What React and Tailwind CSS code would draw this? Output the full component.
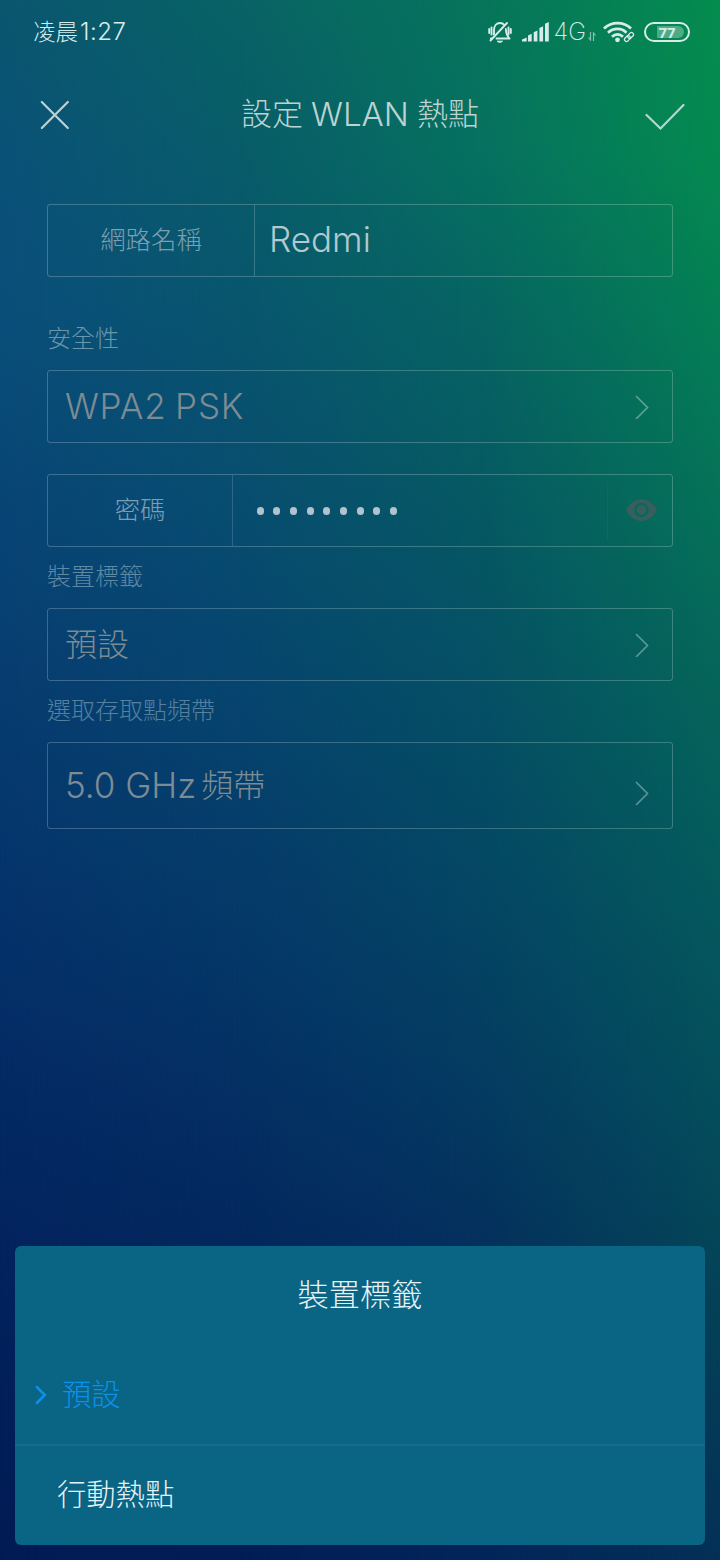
import React, { useState } from 'react';

const tags = ['預設', '行動熱點'];

// light latin glyphs next to the CJK ones
function Latin({ className, children }) {
  return <span className={`font-['Inter'] ${className}`}>{children}</span>;
}

function Backdrop() {
  return (
    <div className="absolute inset-0 -z-10 bg-[linear-gradient(180deg,#0a566f_0px,#0a5278_150px,#0a4f7b_300px,#084576_500px,#073c70_700px,#05336b_900px,#042963_1100px,#03235e_1250px,#011b55_1560px)]">
      <div className="absolute inset-0 bg-[linear-gradient(180deg,#086365_0px,#085c69_150px,#08566e_300px,#084d70_500px,#06446e_700px,#053a69_900px,#042f64_1100px,#03275e_1250px,#021d56_1560px)] [mask-image:linear-gradient(90deg,transparent_0px,#000_240px)]" />
      <div className="absolute inset-0 bg-[linear-gradient(180deg,#06755b_0px,#067160_150px,#066562_300px,#065963_500px,#054f65_700px,#044664_900px,#043a61_1100px,#04305d_1250px,#022559_1560px)] [mask-image:linear-gradient(90deg,transparent_240px,#000_480px)]" />
      <div className="absolute inset-0 bg-[linear-gradient(180deg,#048c4e_0px,#048a50_150px,#048054_300px,#057258_500px,#05645a_700px,#04595c_900px,#044e5c_1100px,#044558_1250px,#033057_1560px)] [mask-image:linear-gradient(90deg,transparent_480px,#000_720px)]" />
    </div>
  );
}

function StatusBar() {
  return (
    <div className="flex h-16 items-center justify-between pl-[33px] pr-[30px] text-[#d5ecea]">
      <div className="flex items-center leading-none">
        <span className="mb-1 text-[22.500px]">凌晨</span>
        <Latin className="ml-0.5 text-[24px] font-light tracking-[0.5px]">1:27</Latin>
      </div>
      <div className="flex items-center">
        {/* muted bell */}
        <svg width="24" height="22" viewBox="0 0 24 22" fill="none" stroke="currentColor" strokeWidth="1.900" strokeLinecap="round" strokeLinejoin="round">
          <path d="M5.800 13.500c.4-2 .2-3 .2-4.500 0-4 2.300-7 6-7 1.800 0 3.300.7 4.300 1.900M17.900 8c.3 4 0 6 3.600 9.500H8.500M2.800 17.500h1" />
          <path d="M1.200 8v4M3.500 6.500v7M20.500 6.500v7M22.800 8v4" />
          <path d="M2.500 19.500L19 2" />
          <path d="M9.500 20.200h5l-1.500 1h-2z" fill="currentColor" strokeWidth="1" />
        </svg>
        <svg className="ml-2.5" width="27" height="20" viewBox="0 0 27 20" fill="currentColor">
          <path d="M0 19.500v-2L4.700 15.500v4zM6 19.500v-6l3.700-1.700v7.700zM11.700 19.500v-9.300l3.700-1.700v11zM17.400 19.500V6l3.700-1.700v15.200zM23 19.500V1.700L26.800 0v19.500z" />
        </svg>
        <Latin className="ml-[5px] text-[24px] font-extralight leading-none">4G</Latin>
        <svg className="mt-2 ml-0.5 opacity-60" width="8" height="9" viewBox="0 0 8 9" fill="none" stroke="currentColor" strokeWidth="1.200">
          <path d="M2.500 0v8L.5 5.500M5.500 9V1l2 2.500" />
        </svg>
        <svg className="ml-[7px]" width="32" height="22" viewBox="0 0 32 22" fill="none" stroke="currentColor" strokeWidth="2.800">
          <path d="M1 7.500C8.500.2 20.500.2 28 7.500M5 11.700c5.500-5 13.500-5 18.500 0M9 15.700c3.300-3 7.700-3 11 0" />
          <circle cx="14.500" cy="18.800" r="2.400" fill="currentColor" stroke="none" />
          <g strokeWidth="1.300" transform="rotate(-45 26 16)">
            <rect x="20.500" y="14" width="6.500" height="4" rx="2" />
            <rect x="25" y="14" width="6.500" height="4" rx="2" />
          </g>
        </svg>
        <div className="relative ml-[9px] flex h-5 w-[46px] items-center justify-center rounded-full border-2 border-current">
          <div className="absolute left-[11px] top-0.5 h-3 w-[27px] rounded-r-full bg-white/30" />
          <span className="relative font-['Open_Sans'] text-[15px] font-bold leading-none">77</span>
        </div>
      </div>
    </div>
  );
}

function Header() {
  return (
    <div className="flex h-[100px] items-center justify-between pl-10 pr-[35px] text-[#bdd2d2]">
      <svg width="30" height="30" viewBox="0 0 30 30" className="mt-0.5" fill="none" stroke="currentColor" strokeWidth="2.200" strokeLinecap="round">
        <path d="M1.800 2l26 26M27.800 2l-26 26" />
      </svg>
      <h1 className="ml-[5px] flex items-center text-[31px] leading-none">
        <span className="mb-[5px]">設定</span>
        <Latin className="mx-[8px] text-[33px] font-light">WLAN</Latin>
        <span className="mb-[5px]">熱點</span>
      </h1>
      <svg width="40" height="30" viewBox="0 0 40 30" className="mt-[3px]" fill="none" stroke="currentColor" strokeWidth="2.200" strokeLinecap="round">
        <path d="M1.500 14l14 13.500L38.500 4" />
      </svg>
    </div>
  );
}

function Arrow({ className = '' }) {
  return (
    <svg className={`text-white/35 ${className}`} width="14" height="24" viewBox="0 0 14 24" fill="none" stroke="currentColor" strokeWidth="1.700" strokeLinecap="round">
      <path d="M1.500 1.500l11 11-11 11" />
    </svg>
  );
}

function SelectBox({ className, arrowClass, children }) {
  return (
    <div className={`flex items-center justify-between rounded-[3px] border-[1.500px] border-white/22 pl-[17px] pr-[23px] text-[32px] leading-none text-[#7d8b93] ${className}`}>
      {children}
      <Arrow className={arrowClass} />
    </div>
  );
}

function TagSheet() {
  const [selected, setSelected] = useState(0);

  return (
    <div className="mx-[15px] mb-[15px] h-[299px] rounded-md bg-[#0a6484] text-[29.300px] leading-none text-[#e6f3f5]">
      <p className="flex h-[98px] items-center justify-center pb-1 text-[31.200px]">裝置標籤</p>
      {tags.map((tag, index) => (
        <div
          key={tag}
          onClick={() => setSelected(index)}
          className={`flex h-[100px] items-center ${index > 0 ? 'border-t-2 border-white/5' : ''}`}
        >
          {index === selected ? (
            <div className="flex items-center pl-5 text-[#0b91ec]">
              <svg width="12" height="20" viewBox="0 0 12 20" className="mt-0.5" fill="none" stroke="currentColor" strokeWidth="2.500" strokeLinecap="round">
                <path d="M1.800 2l8 8-8 8" />
              </svg>
              <span className="ml-[15px] mb-0.5">{tag}</span>
            </div>
          ) : (
            <span className="pb-[5px] pl-[42px]">{tag}</span>
          )}
        </div>
      ))}
    </div>
  );
}

function App() {
  return (
    <div className="relative isolate flex h-[1560px] w-[720px] flex-col overflow-hidden font-['Noto_Sans_CJK_TC',sans-serif] font-light">
      <Backdrop />
      <StatusBar />
      <Header />

      <div className="flex flex-col px-[47px] pt-10">
        {/* SSID */}
        <div className="flex h-[73px] rounded-[3px] border-[1.500px] border-white/22 leading-none">
          <div className="flex w-[207px] items-center justify-center border-r-[1.500px] border-white/20 pb-[3px] text-[25.400px] text-[#7a9fb0]">網路名稱</div>
          <div className="flex items-center pb-[3px] pl-3.5 text-[#b3c9cd]">
            <Latin className="text-[35px] font-light">Redmi</Latin>
          </div>
        </div>

        {/* SECURITY */}
        <p className="mt-[43px] h-[50px] pt-[5px] text-2xl leading-none text-[#6b95aa]">安全性</p>
        <SelectBox className="h-[73px]">
          <Latin className="mb-px text-[35px] font-light tracking-[0.8px] [word-spacing:-2px]">WPA2 PSK</Latin>
        </SelectBox>

        {/* PASSWORD */}
        <div className="mt-[31px] flex h-[73px] rounded-[3px] border-[1.500px] border-white/22 leading-none">
          <div className="flex w-[185px] items-center justify-center border-r-[1.500px] border-white/15 pb-[3px] text-[25.300px] text-[#7a9fb4]">密碼</div>
          <div className="flex flex-1 items-center gap-[9.700px] pl-[23.500px]">
            {Array.from({ length: 9 }).map((_, i) => (
              <span key={i} className="h-2 w-[7px] rounded-full bg-[#b0c4cd]" />
            ))}
          </div>
          <div className="flex w-[65px] items-center pb-px">
            <div className="h-[60px] w-px bg-[#3b5a58]/60" />
            <svg className="ml-[18px]" width="31" height="22" viewBox="0 0 31 22" fill="#385f5d">
              <path fillRule="evenodd" d="M0 11C7-3.500 24-3.500 31 11 24 25.500 7 25.500 0 11zM15.500 3.800a7.200 7.200 0 1 0 0 14.400 7.200 7.200 0 0 0 0-14.400z" />
              <circle cx="15.500" cy="11" r="5" />
            </svg>
          </div>
        </div>

        {/* DEVICE TAG */}
        <p className="h-[61px] pt-4 text-2xl leading-none text-[#5f88a3]">裝置標籤</p>
        <SelectBox className="h-[73px]">
          <span className="mb-[5px]">預設</span>
        </SelectBox>

        {/* AP BAND */}
        <p className="h-[61px] pt-4 text-2xl leading-none text-[#55809f]">選取存取點頻帶</p>
        <SelectBox className="h-[87px]" arrowClass="mt-3.5">
          <span className="flex items-center">
            <Latin className="mr-[5px] text-[35px] font-light">5.0 GHz</Latin>
            <span className="mb-[5px]">頻帶</span>
          </span>
        </SelectBox>
      </div>

      <div className="flex-1" />
      <TagSheet />
    </div>
  );
}

export default App;
